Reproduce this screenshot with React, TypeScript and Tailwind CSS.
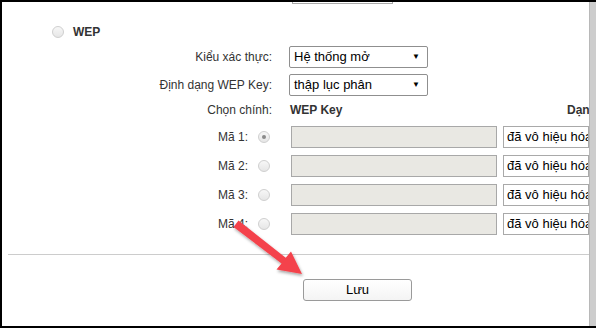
import React from "react";

function Radio({ checked = false }: { checked?: boolean }) {
  return (
    <span className="flex h-[12px] w-[12px] shrink-0 items-center justify-center rounded-full border border-[#cfcfcf] bg-gradient-to-b from-[#f7f7f7] to-[#e6e6e6]">
      {checked && <span className="h-[4px] w-[4px] rounded-full bg-[#8a8a8a]" />}
    </span>
  );
}

function Select({ value, width }: { value: string; width: string }) {
  return (
    <div
      className={`flex h-[22px] ${width} items-center justify-between rounded-[2px] border border-[#8f8f8f] bg-white pl-[4px] pr-[7px] text-[13px] text-black`}
    >
      <span>{value}</span>
      <span className="text-[8px] leading-none">▼</span>
    </div>
  );
}

function Row({
  label,
  children,
  className = "h-[22px]",
}: {
  label: React.ReactNode;
  children: React.ReactNode;
  className?: string;
}) {
  return (
    <div className={`flex items-center ${className}`}>
      <div className="flex w-[270px] shrink-0 items-center justify-end text-[12px] text-[#333]">{label}</div>
      <div className="ml-[17px] flex items-center">{children}</div>
    </div>
  );
}

const keys = [1, 2, 3, 4];

export default function App() {
  return (
    <div className="flex h-[328px] w-[596px] overflow-hidden border-y-2 border-l-2 border-black bg-white font-['Liberation_Sans',Arial,sans-serif]">
      <div className="relative flex-1 overflow-hidden">
        <div className="ml-[290px] h-[2px] w-[101px] border-x border-b border-[#a9a9a9]" />

        <div className="mt-[18px] flex h-[20px] items-center pl-[50px]">
          <Radio />
          <span className="ml-[9px] text-[12px] font-bold text-[#333]">WEP</span>
        </div>

        <div className="mt-[4px]">
          <Row label="Kiểu xác thực:">
            <Select value="Hệ thống mở" width="w-[139px]" />
          </Row>
        </div>
        <div className="mt-[6px]">
          <Row label="Định dạng WEP Key:">
            <Select value="thập lục phân" width="w-[139px]" />
          </Row>
        </div>
        <div className="mt-[4px]">
          <Row label="Chọn chính:" className="h-[20px]">
            <span className="ml-[1px] w-[277px] text-[12px] font-bold text-[#333]">WEP Key</span>
            <span className="whitespace-nowrap text-[12px] font-bold text-[#333]">Dạng khóa</span>
          </Row>
        </div>

        <div className="mt-[6px] flex flex-col gap-[7px]">
          {keys.map((k) => (
            <Row
              key={k}
              label={
                <div className="flex items-center gap-[10px] pr-[2px]">
                  <span>Mã {k}:</span>
                  <Radio checked={k === 1} />
                </div>
              }
            >
              <div className="ml-[2px] h-[22px] w-[206px] border border-[#a8a8a8] bg-[#e9e8e3]" />
              <div className="ml-[6px] flex h-[22px] w-[86px] shrink-0 items-center overflow-hidden whitespace-nowrap border border-[#a9a9a9] bg-white pl-[3px] text-[13px] text-black">
                đã vô hiệu hóa
              </div>
            </Row>
          ))}
        </div>

        <div className="ml-[6px] mt-[19px] h-px bg-[#cccccc]" />

        <div className="ml-[301px] mt-[24px] flex h-[22px] w-[109px] items-center justify-center rounded-[3px] border border-[#9a9a9a] bg-gradient-to-b from-white to-[#f4f4f4] text-[13px] text-black">
          Lưu
        </div>

        <svg
          className="pointer-events-none absolute left-0 top-0"
          width="587"
          height="324"
          viewBox="2 2 587 324"
        >
          <defs>
            <filter id="shadow" x="-20%" y="-20%" width="140%" height="140%">
              <feDropShadow dx="1" dy="2" stdDeviation="1.6" floodColor="#000" floodOpacity="0.35" />
            </filter>
          </defs>
          <polygon
            points="238.5,220.5 285.7,257.8 291,251.5 302,274 276.5,269.5 281.5,263.4 233.5,227"
            fill="#f4434c"
            filter="url(#shadow)"
          />
        </svg>
      </div>
      <div className="w-[7px] shrink-0 border-l border-[#b8b8b8] bg-[#cdcdcd]" />
    </div>
  );
}
